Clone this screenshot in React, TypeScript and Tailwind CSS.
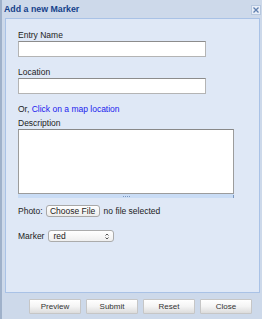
import React from "react";

function Btn({ label }: { label: string }) {
  return (
    <div className="w-[52px] h-[15px] flex items-center justify-center border border-[#c6c6c6] rounded-[1px] bg-gradient-to-b from-[#ffffff] via-[#f4f4f4] to-[#dcdcdc] text-[8px] text-[#333]">
      {label}
    </div>
  );
}

export default function App() {
  return (
    <div className="w-[262px] h-[319px] bg-[#cdd9ea] border-l-2 border-[#9fb1ca] flex flex-col font-['Liberation_Sans',Arial,sans-serif] text-[#222] overflow-hidden">
      <div className="h-[18px] flex items-center justify-between pl-[2px] pr-[1px] shrink-0">
        <span className="text-[8.8px] font-bold text-[#15428b] leading-none">Add a new Marker</span>
        <div className="w-[10px] h-[10px] mt-[1px] border border-[#b7c8df] bg-[#e8eef8] flex items-center justify-center">
          <svg width="8" height="8" viewBox="0 0 8 8">
            <path d="M1.5 1.5 L6.5 6.5 M6.5 1.5 L1.5 6.5" stroke="#5f7fae" strokeWidth="1.3" />
          </svg>
        </div>
      </div>
      <div className="ml-[3px] mr-[2px] h-[275px] shrink-0 border border-[#a9c2e6] bg-[#dfe8f6] pl-[12px] pt-[11px] text-[8.5px] leading-[10px]">
        <div>Entry Name</div>
        <input className="block mt-[1px] w-[188px] h-[16px] bg-white border border-[#b4b4b4] border-t-[#8c8c8c] outline-none" />
        <div className="mt-[10px]">Location</div>
        <input className="block mt-[1px] w-[188px] h-[16px] bg-white border border-[#b4b4b4] border-t-[#8c8c8c] outline-none" />
        <div className="mt-[10px]">
          Or, <span className="text-[#1a1aee]">Click on a map location</span>
        </div>
        <div className="mt-[4px]">Description</div>
        <textarea className="block mt-[1px] w-[216px] h-[65px] bg-white border border-[#9c9c9c] border-t-[#888] outline-none resize-none" />
        <div className="w-[216px] h-[4px] bg-[#c9dcf5] relative flex justify-center items-center">
          <div className="flex gap-[1px]">
            <span className="w-[1px] h-[1px] bg-[#7c98c0]" />
            <span className="w-[1px] h-[1px] bg-[#7c98c0]" />
            <span className="w-[1px] h-[1px] bg-[#7c98c0]" />
            <span className="w-[1px] h-[1px] bg-[#7c98c0]" />
          </div>
          <span className="absolute right-0 bottom-0 w-[1px] h-[3px] bg-[#7c98c0]" />
        </div>
        <div className="mt-[7px] flex items-center h-[12px]">
          <span>Photo:</span>
          <div className="ml-[3px] w-[54px] h-[12px] rounded-[3px] border border-[#a8a8a8] bg-gradient-to-b from-white to-[#ececec] flex items-center justify-center text-[8.5px]">
            Choose File
          </div>
          <span className="ml-[4px]">no file selected</span>
        </div>
        <div className="mt-[13px] flex items-center h-[12px]">
          <span>Marker</span>
          <div className="ml-[4px] w-[66px] h-[12px] rounded-[3px] border border-[#ababab] bg-gradient-to-b from-white to-[#efefef] flex items-center justify-between pl-[4px] pr-[4px]">
            <span>red</span>
            <svg width="4" height="7" viewBox="0 0 4 7">
              <path d="M0.5 2.5 L2 1 L3.5 2.5 M0.5 4.5 L2 6 L3.5 4.5" stroke="#444" strokeWidth="0.9" fill="none" />
            </svg>
          </div>
        </div>
      </div>
      <div className="flex justify-end gap-[5px] pr-[10px] pt-[6px]">
        <Btn label="Preview" />
        <Btn label="Submit" />
        <Btn label="Reset" />
        <Btn label="Close" />
      </div>
    </div>
  );
}
